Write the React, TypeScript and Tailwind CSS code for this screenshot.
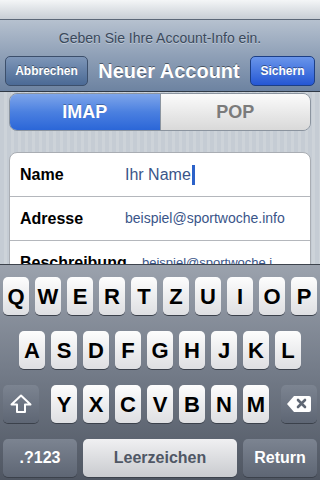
import React from 'react';

const font = { fontFamily: '"Liberation Sans", Arial, sans-serif' };

const row1 = ['Q', 'W', 'E', 'R', 'T', 'Z', 'U', 'I', 'O', 'P'];
const row2 = ['A', 'S', 'D', 'F', 'G', 'H', 'J', 'K', 'L'];
const row3 = ['Y', 'X', 'C', 'V', 'B', 'N', 'M'];

const Key: React.FC<{ label: string }> = ({ label }) => (
    <div className="w-[26px] h-[38px] rounded-[5px] bg-gradient-to-b from-[#fdfdfd] to-[#dedfe2] shadow-[0_1px_0_#3b414b] flex items-center justify-center text-[22px] font-bold text-black">
        {label}
    </div>
);

const DarkKey: React.FC<{ className?: string; children: React.ReactNode }> = ({ className, children }) => (
    <div className={`h-[38px] rounded-[5px] bg-gradient-to-b from-[#7c8491] to-[#5e6674] shadow-[0_1px_0_#3b414b] flex items-center justify-center text-white font-bold ${className ?? ''}`}>
        {children}
    </div>
);

const ShiftIcon = () => (
    <svg width="22" height="20" viewBox="0 0 22 20">
        <path d="M11 1.5 L20.5 10.5 H15 V18 H7 V10.5 H1.5 Z" fill="none" stroke="#ffffff" strokeWidth="2" strokeLinejoin="round" />
    </svg>
);

const DeleteIcon = () => (
    <svg width="26" height="18" viewBox="0 0 26 18">
        <path d="M8 1 H23 Q25 1 25 3 V15 Q25 17 23 17 H8 L1 9 Z" fill="#ffffff" />
        <path d="M12 5 L19 12 M19 5 L12 12" stroke="#5f6774" strokeWidth="2.6" strokeLinecap="round" />
    </svg>
);

const App: React.FC = () => {
    return (
        <div className="w-[320px] h-[480px] flex flex-col overflow-hidden bg-[#c5ccd4]" style={font}>
            {/* top band */}
            <div className="h-[20px] shrink-0 bg-gradient-to-b from-[#f4f6f7] to-[#c8ced5] border-b border-[#5b6777]" />

            {/* nav bar */}
            <div className="h-[72px] shrink-0 flex flex-col bg-gradient-to-b from-[#b6c1cf] via-[#8fa0b7] to-[#6d83a1] border-b border-[#2f3946]">
                <div className="h-[36px] flex items-center justify-center text-[14px] text-[#3a495c] [text-shadow:0_1px_0_rgba(255,255,255,0.35)]">
                    Geben Sie Ihre Account-Info ein.
                </div>
                <div className="flex items-center px-[5px]">
                    <div className="w-[83px] h-[30px] rounded-[5px] border border-[#3c4f6b] bg-gradient-to-b from-[#7e96b8] to-[#4b6a95] flex items-center justify-center text-[12px] font-bold text-white [text-shadow:0_-1px_0_rgba(0,0,0,0.4)]">
                        Abbrechen
                    </div>
                    <div className="flex-1 text-center text-[20px] font-bold text-white [text-shadow:0_-1px_0_rgba(0,0,0,0.45)]">
                        Neuer Account
                    </div>
                    <div className="w-[65px] h-[30px] rounded-[5px] border border-[#1d3f85] bg-gradient-to-b from-[#6a95ea] to-[#2556d4] flex items-center justify-center text-[12px] font-bold text-white [text-shadow:0_-1px_0_rgba(0,0,0,0.4)]">
                        Sichern
                    </div>
                </div>
            </div>

            {/* content */}
            <div className="flex-1 overflow-hidden px-[9px] pt-[1px] bg-[repeating-linear-gradient(90deg,#c5ccd4_0px,#c5ccd4_4px,#cdd3d9_4px,#cdd3d9_7px)]">
                <div className="flex h-[38px] rounded-[8px] border border-[#8b949f] overflow-hidden">
                    <div className="flex-1 flex items-center justify-center bg-gradient-to-b from-[#7ea5ea] via-[#4b80e0] to-[#2b66d8] text-[18px] font-bold text-white [text-shadow:0_-1px_0_rgba(0,0,0,0.3)]">
                        IMAP
                    </div>
                    <div className="flex-1 flex items-center justify-center bg-gradient-to-b from-[#fbfbfb] to-[#d9d9d9] border-l border-[#8b949f] text-[18px] font-bold text-[#7b7b7b]">
                        POP
                    </div>
                </div>

                <div className="mt-[21px] bg-white rounded-[8px] border border-[#a9adb3]">
                    <div className="h-[44px] flex items-center border-b border-[#b4b7bc]">
                        <div className="w-[115px] pl-[10px] text-[16px] font-bold text-black">Name</div>
                        <div className="flex items-center text-[16px] text-[#3a5589]">
                            Ihr Name
                            <span className="ml-[1px] w-[3px] h-[20px] bg-[#2c62c9]" />
                        </div>
                    </div>
                    <div className="h-[44px] flex items-center border-b border-[#b4b7bc]">
                        <div className="w-[115px] pl-[10px] text-[16px] font-bold text-black">Adresse</div>
                        <div className="text-[14px] text-[#3a5589]">beispiel@sportwoche.info</div>
                    </div>
                    <div className="h-[44px] flex items-center">
                        <div className="w-[132px] pl-[10px] text-[16px] font-bold text-black">Beschreibung</div>
                        <div className="text-[13px] text-[#3a5589] whitespace-nowrap">beispiel@sportwoche.i</div>
                    </div>
                </div>
            </div>

            {/* keyboard */}
            <div className="h-[216px] shrink-0 flex flex-col pt-[12px] gap-[16px] bg-gradient-to-b from-[#9ba2ad] via-[#737b88] to-[#4f5662] border-t border-[#3d434c]">
                <div className="flex gap-[6px] pl-[3px]">
                    {row1.map(k => <Key key={k} label={k} />)}
                </div>
                <div className="flex gap-[6px] pl-[19px]">
                    {row2.map(k => <Key key={k} label={k} />)}
                </div>
                <div className="flex items-center px-[3px] justify-between">
                    <DarkKey className="w-[36px]"><ShiftIcon /></DarkKey>
                    <div className="flex gap-[6px]">
                        {row3.map(k => <Key key={k} label={k} />)}
                    </div>
                    <DarkKey className="w-[36px]"><DeleteIcon /></DarkKey>
                </div>
                <div className="flex gap-[6px] px-[3px]">
                    <DarkKey className="w-[74px] text-[16px]">.?123</DarkKey>
                    <div className="w-[154px] h-[38px] rounded-[5px] bg-gradient-to-b from-[#f0f0f2] to-[#c9cbcf] shadow-[0_1px_0_#3b414b] flex items-center justify-center text-[16px] font-bold text-[#4f5765]">
                        Leerzeichen
                    </div>
                    <DarkKey className="w-[74px] text-[16px]">Return</DarkKey>
                </div>
            </div>
        </div>
    );
};

export default App;
